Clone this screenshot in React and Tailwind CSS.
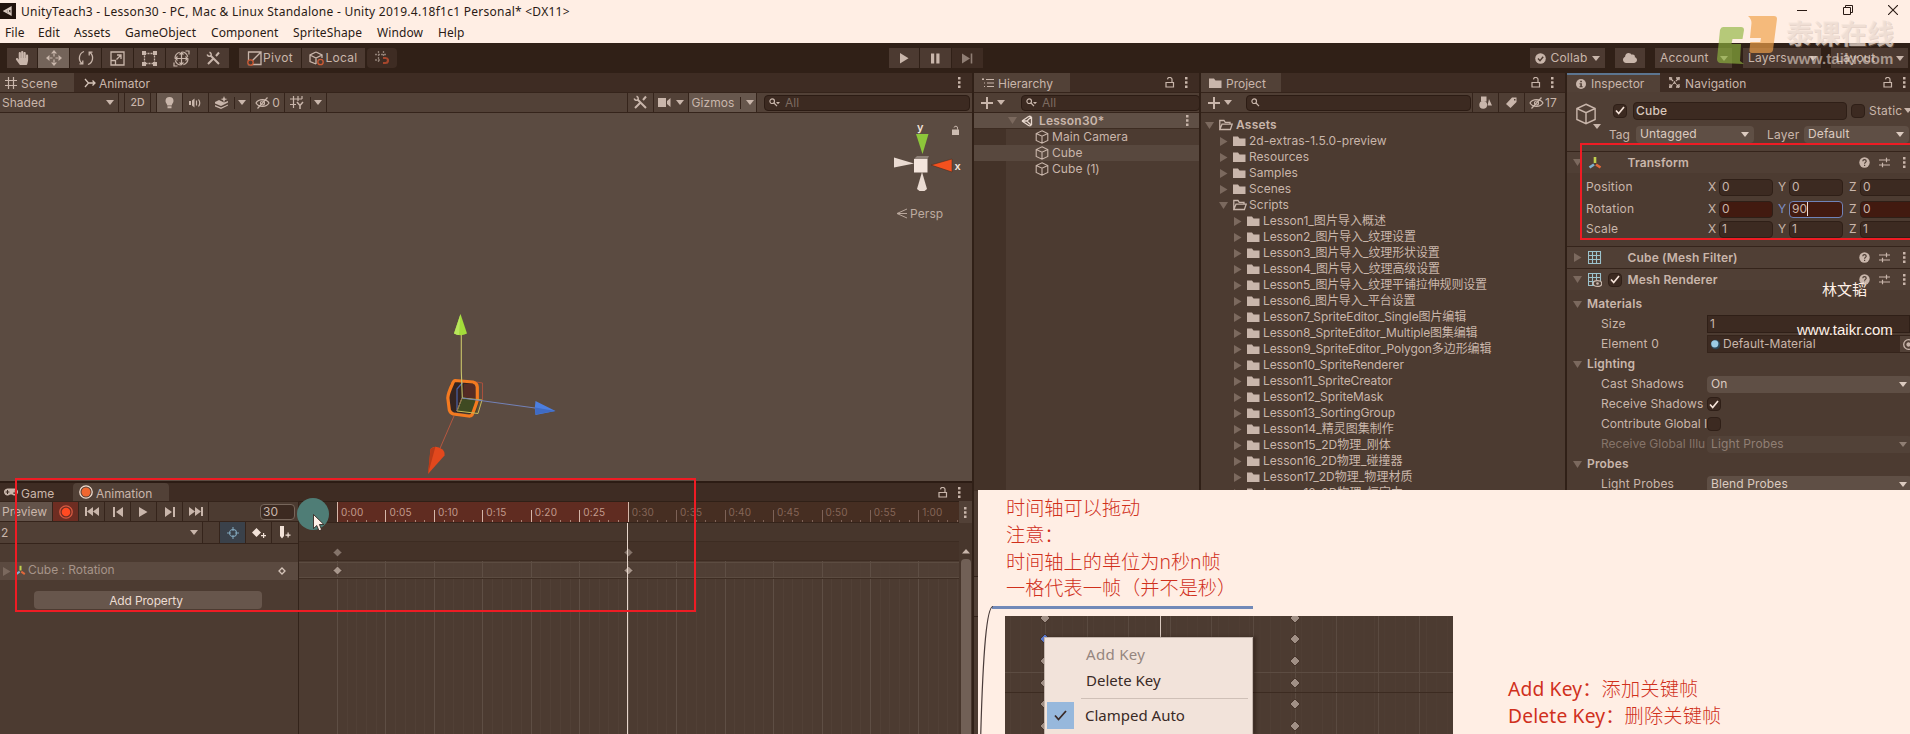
import React from "react";
import { FaHandPaper, FaCloud, FaGamepad } from "react-icons/fa";

const NOTE_FONT = "font-['Noto_Sans','Noto_Sans_CJK_SC',sans-serif]";

/* ---------- small icons ---------- */
const Svg = ({ w = 16, h = 16, vb, className = "", children, fill = "none", sw = 1.3 }) => (
  <svg width={w} height={h} viewBox={vb || `0 0 ${w} ${h}`} fill={fill} stroke={fill === "none" ? "currentColor" : "none"} strokeWidth={sw} className={"shrink-0 " + className}>
    {children}
  </svg>
);
const Caret = ({ className = "" }) => (
  <Svg w={8} h={5} fill="currentColor" className={className}><path d="M0 0h8L4 5z" /></Svg>
);
const Fold = ({ open, className = "" }) => (
  <Svg w={9} h={9} fill="currentColor" className={"text-[#7b695e] " + className}>
    {open ? <path d="M0 1h9L4.500 8z" /> : <path d="M1 0v9l7.500-4.500z" />}
  </Svg>
);
const Kebab = ({ className = "" }) => (
  <Svg w={3} h={11} fill="currentColor" className={className}><path d="M0 0h2.500v2.500H0zM0 4.200h2.500v2.500H0zM0 8.400h2.500v2.500H0z" /></Svg>
);
const Lock = ({ className = "" }) => (
  <Svg w={10} h={11} sw={1.2} className={className}><path d="M1 5.500h7.500v4.500H1zM7 5.500V3a2 2 0 0 0-4.500-.6" /></Svg>
);
const Folder = () => (
  <Svg w={13} h={12} fill="currentColor"><path d="M0 1.500h5l1.500 2H12.500V11H0z" /></Svg>
);
const FolderOpen = () => (
  <Svg w={14} h={12} sw={1.300}><path d="M.8 10.500V1.500H5l1.200 1.800H11V5M.8 10.500 3 5.200h10.200l-1.800 5.300z" /></Svg>
);
const Cube = ({ s = 14, sw = 1.100 }) => (
  <Svg w={s} h={s} vb="0 0 14 14" sw={sw}><path d="M7 .8 12.800 3.500v7L7 13.200 1.200 10.500v-7zM1.200 3.500 7 6.200l5.800-2.700M7 6.200v7" /></Svg>
);
const Search = ({ caret }) => (
  <Svg w={11} h={9} sw={1.200}><circle cx="3.200" cy="3.200" r="2.300" /><path d="m5 5 3 3.200" />{caret && <path d="M7 4h4L9 6.200z" fill="currentColor" stroke="none" />}</Svg>
);
const Tools = () => (
  <Svg w={15} h={15} sw={2}><path d="M4.500 4.500 13 13M2 13 8 7M10 5l3-3.500" /><path d="M1.200 3.500c.6 2 2.600 2.300 3.600 1.200S5 1.800 3.500 1.200" strokeWidth={1.500} /></Svg>
);
const Check = () => (
  <Svg w={10} h={9} sw={1.700} className="text-[#f6e4da]"><path d="m1 4.500 2.700 3L9 1" /></Svg>
);
const Help = () => (
  <Svg w={11} h={11} fill="currentColor"><circle cx="5.500" cy="5.500" r="5.200" /><path d="M3.800 4.200c.1-2.200 3.400-2 3.400 0 0 1.200-1.600 1.200-1.600 2.500M5.600 7.700v1.200" stroke="#4e3e34" strokeWidth="1.200" fill="none" /></Svg>
);
const Preset = () => (
  <Svg w={11} h={11} sw={1.200}><path d="M0 3h11M0 8h11M7.500 .8v4.400M3.500 5.800v4.400" /></Svg>
);
const HiddenEye = ({ className = "" }) => (
  <Svg w={15} h={12} sw={1.200} className={className}><path d="M1 6c2.500-4.500 10.500-4.500 13 0-2.500 4.500-10.500 4.500-13 0zM2.500 11.500 12.500.5" /><circle cx="7.500" cy="6" r="2" /></Svg>
);
const Grid = () => (
  <Svg w={12} h={12} sw={1.200}><path d="M3.500 0v12M8.500 0v12M0 3.500h12M0 8.500h12" /></Svg>
);
const Axes = ({ s = 14 }) => (
  <Svg w={s} h={s} vb="0 0 14 14" sw={2.600}>
    <path d="M7 1v6" stroke="#c2d04e" /><path d="M6 8.500 1.500 11.500" stroke="#7fb0cc" /><path d="m8 8.500 4.500 3" stroke="#e2683a" />
  </Svg>
);
const MeshIcon = ({ eye }) => (
  <Svg w={14} h={14} sw={1.100} className="text-[#9cc2cc]">
    <path d="M.5.500h12v12H.5zM4.500.500v12M8.500.500v12M.5 4.500h12M.5 8.500h12" />
    {eye && <><ellipse cx="9.500" cy="10.500" rx="4.200" ry="2.900" fill="#4e3e34" stroke="#cbb9ae" /><circle cx="9.500" cy="10.500" r="1.300" fill="#cbb9ae" stroke="none" /></>}
  </Svg>
);

/* ---------- shared pieces ---------- */
const TBtn = ({ w, active, children }) => (
  <div className={`flex h-5 items-center justify-center ${w} ${active ? "bg-[#74645a]" : "bg-[#4c3a31]"}`}>{children}</div>
);
const SearchBox = ({ w, caret, text }) => (
  <div className={`flex h-4 items-center gap-[5px] rounded border border-[#2c1c14] bg-[#3c2a21] pl-1 ${w}`}>
    <Search caret={caret} /><span className="text-[12px] leading-4 text-[#7d6b60]">{text}</span>
  </div>
);

const MENU = [["File", "w-[33px]"], ["Edit", "w-9"], ["Assets", "w-[51px]"], ["GameObject", "w-[86px]"], ["Component", "w-[82px]"], ["SpriteShape", "w-[84px]"], ["Window", "w-[61px]"], ["Help", "w-10"]];

function TitleArea() {
  return (
    <div className={`h-[43px] shrink-0 bg-[#ffeee4] text-[#2a1a14] ${NOTE_FONT}`}>
      <div className="flex h-[22px] items-center">
        <div className="flex h-4 w-4 items-center justify-center bg-[#21130d] text-[#d8c8be]">
          <Svg w={10} h={10} sw={1.300}><path d="M1 5 8 1.200v7.600zM1 5h4l3-3.800M5 5l3 3.800" /></Svg>
        </div>
        <span className="ml-[5px] mt-[2px] w-[560px] whitespace-nowrap text-[12px] tracking-[0.260px]">UnityTeach3 - Lesson30 - PC, Mac &amp; Linux Standalone - Unity 2019.4.18f1c1 Personal* &lt;DX11&gt;</span>
        <div className="ml-auto mr-[12px] flex items-center gap-[35.500px] pb-[2px]">
          <Svg w={10} h={10} sw={1}><path d="M0 5.500h10" /></Svg>
          <Svg w={10} h={10} sw={1}><path d="M.5 2.500h7v7h-7zM2.500 2.500v-2h7v7h-2" /></Svg>
          <Svg w={10} h={10} sw={1.100}><path d="m0 0 10 10M10 0 0 10" /></Svg>
        </div>
      </div>
      <div className="flex h-[21px] items-center pl-[5px] text-[12px] tracking-[0.100px]">
        {MENU.map(([m, w]) => <span key={m} className={`whitespace-nowrap ${w}`}>{m}</span>)}
      </div>
    </div>
  );
}

function MainToolbar() {
  return (
    <div className="flex h-[30px] shrink-0 items-center bg-[#302017] text-[12px] text-[#c9b6ab]">
      <div className="flex w-[232px] gap-px pl-[7px]">
        <TBtn w="w-[30px]"><FaHandPaper size={14} /></TBtn>
        <TBtn w="w-[31px]" active>
          <Svg w={16} h={16} fill="currentColor"><path d="M8 0l3 3.500H5zM8 16l3-3.500H5zM0 8l3.500-3v6zM16 8l-3.500-3v6zM7.400 4h1.200v2.500H7.400zM7.400 9.500h1.200V12H7.400zM4 7.400h2.500v1.200H4zM9.500 7.400H12v1.200H9.500z" /></Svg>
        </TBtn>
        <TBtn w="w-[31px]"><Svg w={16} h={16}><path d="M6 1.500A7 7 0 0 0 4 13.500M10 14.500A7 7 0 0 0 12 2.500M1.500 13.800h3.300v-3.300M14.500 2.200h-3.300v3.300" /></Svg></TBtn>
        <TBtn w="w-[31px]"><Svg w={15} h={15}><path d="M1 1h13v13H1zM1 9.500h4.500V14M6.500 8.500l4-4M7 4h4v4" /></Svg></TBtn>
        <TBtn w="w-[31px]"><Svg w={15} h={15}><path d="M2.500 2.500h10v10h-10z" strokeDasharray="2 1" /><path d="M0 0h4v4H0zM11 0h4v4h-4zM0 11h4v4H0zM11 11h4v4h-4z" fill="currentColor" stroke="none" /></Svg></TBtn>
        <TBtn w="w-[31px]"><Svg w={17} h={17} sw={1.200}><circle cx="8.500" cy="8.500" r="6.500" strokeDasharray="8 2" /><path d="M8.500 3v11M3 8.500h11M6.500 4.500l2-2 2 2M6.500 12.500l2 2 2-2M4.500 6.500l-2 2 2 2M12.500 6.500l2 2-2 2M12.500 1h3.500v3.500M1 12.500V16h3.500" /></Svg></TBtn>
        <TBtn w="w-[31px]"><Tools /></TBtn>
      </div>
      <div className="ml-[7px] flex gap-px">
        <TBtn w="w-[62px]">
          <Svg w={15} h={15} className="mr-px"><path d="M1.500 1h12.500v12.500H1.500zM4 11 14 1" /><circle cx="3.500" cy="11.500" r="2.700" stroke="#cf5b35" fill="#4c3a31" /></Svg>
          <span className="tracking-[0.400px]">Pivot</span>
        </TBtn>
        <TBtn w="w-[63px]">
          <Svg w={16} h={15}><path d="M7 1 13 4v3M7 13 1 10.500V4l6-3M1 4l6 3 6-3M7 7v6" /><circle cx="11.500" cy="11" r="2.700" stroke="#cf5b35" fill="#4c3a31" /></Svg>
          <span className="tracking-[0.300px]">Local</span>
        </TBtn>
      </div>
      <div className="ml-[2px] flex h-5 w-[30px] items-center justify-center rounded-sm bg-[#3e2c23] text-[#8f7e74]">
        <Svg w={14} h={14}><path d="M3.500 0v12M8.500 0v6M0 3.500h11M0 9h6" strokeDasharray="2 1" /><path d="M8 7h2.500a2.400 2.400 0 0 1 0 5H8" stroke="#a5462c" strokeWidth="2.200" /></Svg>
      </div>
      <div className="ml-[492px] flex gap-px">
        <TBtn w="w-[30px]"><Svg w={9} h={11} fill="currentColor"><path d="M0 0v10.500l8.500-5.200z" /></Svg></TBtn>
        <TBtn w="w-[31px]"><Svg w={9} h={11} fill="currentColor"><path d="M0 .5h3.200v10H0zM5.300.5h3.200v10H5.300z" /></Svg></TBtn>
        <div className="flex h-5 w-[31px] items-center justify-center bg-[#3e2c23] text-[#8f7e74]"><Svg w={11} h={11} fill="currentColor"><path d="M0 .5v10l8-5zM8.700.5h1.600v10H8.700z" /></Svg></div>
      </div>
      <div className="ml-auto flex pr-[2px] tracking-[0.200px]">
        <TBtn w="w-[75px]"><Svg w={11} h={11} fill="currentColor" className="mr-[4px]"><circle cx="5.500" cy="5.500" r="5.300" /><path d="m3 5.500 2 2.200 3.200-4" stroke="#4c3a31" strokeWidth="1.400" fill="none" /></Svg>Collab<Caret className="ml-1" /></TBtn>
        <div className="ml-[10px]"><TBtn w="w-[30px]"><FaCloud size={14} /></TBtn></div>
        <div className="ml-[10px] flex h-5 w-[77px] items-center justify-between bg-[#4c3a31] pl-[5px] pr-1">Account<Caret /></div>
        <div className="ml-[11px] flex h-5 w-[78px] items-center justify-between bg-[#4c3a31] pl-[5px] pr-1">Layers<Caret /></div>
        <div className="ml-[10px] flex h-5 w-[77px] items-center justify-between bg-[#4c3a31] pl-[5px] pr-1">Layout<Caret /></div>
      </div>
    </div>
  );
}

const Cell = ({ w, className = "", children }) => (
  <div className={`flex h-full items-center justify-center border-r border-[#35241b] ${w} ${className}`}>{children}</div>
);

function SceneGizmos() {
  return (
    <svg width="972" height="368" viewBox="0 113 972 368" className="block">
      {/* orientation gizmo */}
      <path d="M916 134h12.500l-6 20z" fill="#8dc63a" />
      <path d="M894 157.500v10l20-4z" fill="#eadbd2" />
      <path d="M952 159v13l-21-7z" fill="#f4511e" stroke="#3d2a20" strokeWidth=".5" />
      <path d="M922 172l5 17-2.500 2h-5l-2.500-2z" fill="#eadbd2" />
      <path d="M914 159l3-3h12l-1.500 3z" fill="#8f8178" /><path d="M914 159h13.500v13.500H914z" fill="#f4e5dc" />
      <g fill="#cdbcb1"><path d="M952 129.500h7v5.500h-7z" /><path d="M957.500 129.500v-1.300a1.700 1.700 0 0 0-3.400-.6" fill="none" stroke="#cdbcb1" strokeWidth="1" /></g>
      <path d="M907 209l-10 4.500 10 4.500M897 213.500h10" fill="none" stroke="#b9a79c" strokeWidth="1" />
      <g className="font-['Inter',sans-serif]">
        <text x="917" y="131" fontSize="11" fontWeight="600" fill="#f0e2d9">y</text>
        <text x="954.500" y="170" fontSize="11" fontWeight="600" fill="#f0e2d9">x</text>
        <text x="910" y="218" fontSize="12" fill="#bdaba0" letterSpacing=".1">Persp</text>
      </g>
      {/* move handles and the selected cube */}
      <path d="M450 384l5-3 20 2 1 16-5 15-20-2-2-5z" fill="#352420" />
      <path d="M464 384h11l1 15-13-1z" fill="#552b24" />
      <path d="M462 397l14 2 3 3-3 11-19-2z" fill="#3f4a22" />
      <path d="M473 381.500l9.500 1.500v17" fill="none" stroke="#a9503c" strokeWidth="1" />
      <path d="M457 411v-22l6-7" fill="none" stroke="#4a62a8" strokeWidth="1.200" />
      <path d="M455 380.500l18 1.500q4 1 4.300 5v13q-1 4-5 14.500-1 2-4 1.500l-15-2q-3-1-4-4l-1.500-12q0-4 5-15 1-2.500 2.200-2.500z" fill="none" stroke="#f47a20" strokeWidth="3.200" />
      <path d="M457 411l21 2.500 4-13.500-20-2z" fill="none" stroke="#c9bd5a" strokeWidth="1" />
      <path d="M461.300 335v36l1 27" fill="none" stroke="#c9c46a" strokeWidth="1.100" />
      <path d="M462 398l73 10" fill="none" stroke="#7382b8" strokeWidth="1" />
      <path d="M462 398l-5 13" fill="none" stroke="#8a6a50" strokeWidth="1" />
      <path d="M454 416l-16 37" fill="none" stroke="#b5573f" strokeWidth="1" />
      <path d="M460.500 314l6.500 19.500q-6.500 3.500-13 0z" fill="#a3dc3a" /><path d="M460.500 314l-6.500 19.500q3 1.500 5 1.500z" fill="#b9e65c" />
      <path d="M555.500 411l-20-10q-1.500 7 0 14z" fill="#4c7fe0" /><path d="M555.500 411l-20 3.500-.5-7z" fill="#3f6bc4" />
      <path d="M428 474l2.500-25q5-4.500 12 .5 2.500 2 2 6z" fill="#e2481d" /><path d="M428 474l2.500-25 5-2.500z" fill="#b93a18" />
    </svg>
  );
}

function ScenePanel() {
  return (
    <div className="flex h-[408px] shrink-0 flex-col text-[12px] text-[#c9b6ab]">
      <div className="flex h-[19px] items-center bg-[#3e2c23]">
        <div className="flex h-full w-[74px] items-center bg-[#524137] pl-[5px]"><Grid /><span className="ml-1 mt-[2px] tracking-[0.200px]">Scene</span></div>
        <Svg w={12} h={10} className="ml-[10px] text-[#d5c4b9]"><path d="M1 1l3.500 4L1 9M4.500 5H11M8.500 2.500 11 5 8.500 7.500" /></Svg>
        <span className="ml-[3px] mt-[2px]">Animator</span>
        <Kebab className="ml-auto mr-[11px]" />
      </div>
      <div className="flex h-[21px] items-center border-y border-[#35241b] bg-[#524137]">
        <Cell w="w-[119px]" className="!justify-start"><span className="w-[106px] pl-[2px]">Shaded</span><Caret /></Cell>
        <Cell w="w-[6px]" /><Cell w="w-[26px]"><span className="text-[10.500px] font-medium">2D</span></Cell><Cell w="w-[6px]" />
        <Cell w="w-[26px]" className="bg-[#67574d]"><Svg w={9} h={12} fill="currentColor"><path d="M4.500 0a4 4 0 0 1 4 4c0 2-1.500 2.500-1.800 4.500H2.300C2 6.500.5 6 .5 4a4 4 0 0 1 4-4zM2.500 9.300h4v2h-4z" /></Svg></Cell>
        <Cell w="w-[26px]"><Svg w={13} h={10} sw={1.200}><path d="M0 3h2v4H0zM3 2.500 5.500.5v9L3 7.500z" fill="currentColor" stroke="none" /><path d="M7.500 2.500v5M9.500 1.500q2.500 3.500 0 7" /></Svg></Cell>
        <Cell w="w-[25px]" className="!border-r-0"><Svg w={13} h={13} fill="currentColor"><path d="M0 6l4-2 5 2.500L13 5v1.500L6 10 0 7.500zM0 9l6 2.500L13 8.500v1L6 13 0 10.500zM9 0l1 2.500L12.500 3 10 4 9 6.500 8 4 5.500 3 8 2.500z" /></Svg></Cell>
        <Cell w="w-[17px]"><div className="mr-auto h-3 w-px bg-[#35241b]" /><Caret className="mr-1" /></Cell>
        <Cell w="w-[34px]"><HiddenEye /><span className="ml-[2px]">0</span></Cell>
        <Cell w="w-[25px]" className="!border-r-0 pr-[2px]"><Svg w={14} h={13} sw={1.200}><path d="M3.500 0v12M8 0v5M0 3h12M0 8.500h6M12 0v3" /><path d="M7 6l3 3.500V13M13 6l-3 3.500" strokeWidth="1.500" /></Svg></Cell>
        <Cell w="w-[17px]"><div className="mr-auto h-3 w-px bg-[#35241b]" /><Caret className="mr-1" /></Cell>
        <Cell w="w-[301px]" />
        <Cell w="w-[26px]"><Tools /></Cell>
        <Cell w="w-[35px]"><Svg w={13} h={9} fill="currentColor"><path d="M0 0h8v9H0zM9 3l3.500-3v9L9 6z" /></Svg><Caret className="ml-[5px]" /></Cell>
        <Cell w="w-[68px]" className="bg-[#67574d]"><span className="tracking-[0.100px]">Gizmos</span><div className="mx-[5px] h-3 w-px bg-[#35241b]" /><Caret /></Cell>
        <div className="ml-[7px]"><SearchBox w="w-[206px]" caret text="All" /></div>
      </div>
      <div className="h-[368px] bg-[#5b4b41]"><SceneGizmos /></div>
    </div>
  );
}

const FRAME = 48.45;
const LABELS = ["0:00", "0:05", "0:10", "0:15", "0:20", "0:25", "0:30", "0:35", "0:40", "0:45", "0:50", "0:55", "1:00"];
const range = (n) => Array.from({ length: n }, (_, i) => i);
const Diamond = ({ x, y, c, r = 4.500 }) => <path d={`M${x} ${y - r}l${r} ${r}-${r} ${r}-${r}-${r}z`} fill={c} stroke="#3a281f" strokeWidth=".8" />;

function Timeline() {
  return (
    <div className="w-[660px] bg-[#4c3b31]">
      <div className="relative flex h-[21px] border-b border-[#35241b] bg-[#462e22]">
        <div className="h-full w-[38px] bg-[#3e2c23]" />
        <div className="h-full w-[291px] bg-[#602c21]" />
        <div className="absolute bottom-0 left-[38px] flex h-full w-[621px] items-center text-[10px] tracking-[0.200px] text-[#c29a8c]">
          {LABELS.map((l, i) => <span key={l} className={`w-[48.450px] shrink-0 pl-[4px] pt-px ${i > 5 ? "text-[#856557]" : ""}`}>{l}</span>)}
        </div>
        <svg width="660" height="20" className="absolute left-0 top-0">
          {range(65).map((i) => {
            const x = Math.round(38 + (i * FRAME) / 5) + 0.5;
            const h = i === 0 ? 20 : i % 5 ? 2 : i === 30 ? 20 : 12;
            return <path key={i} d={`M${x} 20v-${h}`} stroke={i % 5 === 0 && i < 31 ? "#d6b7aa" : i < 31 ? "#a98577" : "#7d6257"} />;
          })}
        </svg>
      </div>
      <svg width="660" height="211" viewBox="299 523 660 211" className="block">
        <path d="M299 523h660v18H299z" fill="#47362c" /><path d="M299 542h660v18H299z" fill="#443228" />
        <path d="M299 541.500h660M299 560.500h660" stroke="#3d2c22" />
        <path d="M299 562h660v15H299z" fill="#503f35" />
        {range(65).map((i) => {
          const x = Math.round(337 + (i * FRAME) / 5) + 0.5;
          return <path key={i} d={`M${x} ${i % 5 ? 562 : 561}V734`} stroke={i % 5 ? "#514036" : "#5e4e44"} />;
        })}
        <path d="M299 562.500h660M299 577.500h660" stroke="#5c4c41" /><path d="M299 578.500h660" stroke="#3e2d23" />
        <Diamond x={337.500} y={552.500} c="#85746a" /><Diamond x={628.500} y={552.500} c="#85746a" />
        <Diamond x={337.500} y={570.500} c="#a8978c" /><Diamond x={628.500} y={570.500} c="#a8978c" />
        <path d="M627.500 523v211" stroke="#e6d5cb" />
      </svg>
    </div>
  );
}

function AnimationPanel() {
  const btn = "w-[26px]";
  return (
    <div className="flex h-[253px] shrink-0 flex-col border-t-2 border-[#2c1c14] text-[12px] text-[#c9b6ab]">
      <div className="flex h-[18px] items-center bg-[#3e2c23]">
        <div className="flex w-[73px] items-center pl-1"><FaGamepad size={14} /><span className="ml-[3px] mt-[3px]">Game</span></div>
        <div className="flex h-full w-24 items-center rounded-t-sm bg-[#524137] pl-[6px]">
          <Svg w={14} h={14}><circle cx="7" cy="7" r="6.200" stroke="#f3ddcf" /><circle cx="7" cy="7" r="4.500" fill="#f0662f" stroke="none" /></Svg>
          <span className="ml-[3px] mt-[3px] tracking-[-0.050px]">Animation</span>
        </div>
        <Lock className="ml-auto" /><Kebab className="ml-[10px] mr-[11px]" />
      </div>
      <div className="flex h-[233px]">
        <div className="w-[299px] border-r border-[#33231a] bg-[#4c3b31]">
          <div className="flex h-[21px] items-center border-y border-[#35241b]">
            <Cell w="w-[53px]" className="bg-[#63534a] !justify-start pl-[2px] pt-px">Preview</Cell>
            <Cell w={btn} className="bg-[#6e2d22]"><Svg w={14} h={14}><circle cx="7" cy="7" r="6.200" stroke="#d65a42" /><circle cx="7" cy="7" r="4.300" fill="#ff4a22" stroke="none" /></Svg></Cell>
            <Cell w={btn}><Svg w={14} h={9} fill="currentColor"><path d="M0 0h2v9H0zM8 0v9L2 4.500zM14 0v9L8 4.500z" /></Svg></Cell>
            <Cell w={btn}><Svg w={10} h={10} fill="currentColor"><path d="M0 0h2v10H0zM10 0v10L3 5z" /></Svg></Cell>
            <Cell w={btn}><Svg w={9} h={10} fill="currentColor"><path d="M0 0v10l8.500-5z" /></Svg></Cell>
            <Cell w={btn}><Svg w={10} h={10} fill="currentColor"><path d="M8 0h2v10H8zM0 0v10l7-5z" /></Svg></Cell>
            <Cell w={btn}><Svg w={14} h={9} fill="currentColor"><path d="M12 0h2v9h-2zM0 0v9l6-4.500zM6 0v9l6-4.500z" /></Svg></Cell>
            <div className="ml-auto mr-[3px] h-4 w-[35px] rounded-sm border border-[#77665b] bg-[#3c2a21] pl-[2px] leading-[14px] tracking-[0.200px]">30</div>
          </div>
          <div className="flex h-[22px] items-center border-b border-[#35241b]">
            <Cell w="w-[203px]" className="bg-[#503f35] !justify-start"><span className="w-[190px] pl-px pt-px">2</span><Caret /></Cell>
            <Cell w="w-[17px]" />
            <Cell w={btn} className="bg-[#3a414a] text-[#7fa3b8]"><Svg w={12} h={12} sw={1.100}><circle cx="6" cy="6" r="3.500" /><path d="M6 0v4M6 8v4M0 6h4M8 6h4" /></Svg></Cell>
            <Cell w={btn} className="text-[#f2e2d8]"><Svg w={14} h={12} fill="currentColor"><path d="M4.500 1 9 5.500 4.500 10 0 5.500zM9 8h5v1.200H9zM11 6h1.200v5H11z" /></Svg></Cell>
            <Cell w={btn} className="!border-r-0 text-[#f2e2d8]"><Svg w={12} h={13} fill="currentColor"><path d="M1 0h4v10l-2 2.500L1 10zM6.500 8.500h5v1.200h-5zM8.500 6.500h1.200v5H8.500z" /></Svg></Cell>
          </div>
          <div className="mt-[18px] flex h-[18px] items-center bg-[#5b4a40] pb-[2px] text-[#a69489]">
            <Fold className="ml-[2px] mt-[3px]" /><div className="ml-[4px]"><Axes s={11} /></div>
            <span className="ml-[2px] tracking-[-0.020px]">Cube : Rotation</span>
            <Svg w={8} h={8} className="ml-auto mr-3 mt-[2px] text-[#d5c4b9]"><path d="M4 1l3 3-3 3-3-3z" /></Svg>
          </div>
          <div className="ml-[34px] mt-[11px] h-[18px] w-[228px] rounded-sm bg-[#67564c] pr-1 text-center leading-[19px] tracking-[-0.150px] text-[#ecdcd2]">Add Property</div>
        </div>
        <div className="mt-px"><Timeline /></div>
        <div className="flex flex-1 flex-col items-center bg-[#47362c]">
          <div className="flex h-[22px] w-full items-center justify-center bg-[#524137]"><Kebab /></div>
          <Svg w={8} h={5} fill="currentColor" className="mt-[26px]"><path d="M0 4.500h8L4 0z" /></Svg>
          <div className="mt-[5px] w-[10px] flex-1 rounded-t bg-[#716056]" />
        </div>
      </div>
    </div>
  );
}

const PanelTabs = ({ w, icon, title }) => (
  <div className="flex h-[19px] items-center bg-[#3e2c23]">
    <div className={`flex h-full items-center bg-[#524137] pl-2 ${w}`}>{icon}<span className="ml-1 mt-[3px]">{title}</span></div>
    <Lock className="ml-auto" /><Kebab className="ml-[10px] mr-[11px]" />
  </div>
);
const Plus = () => <><Svg w={12} h={12} sw={2}><path d="M6 0v12M0 6h12" /></Svg><Caret className="ml-1" /></>;

function Hierarchy() {
  return (
    <div className="w-[225px] bg-[#4c3b31] text-[12px] text-[#c9b6ab]">
      <PanelTabs w="w-[96px]" title="Hierarchy" icon={<Svg w={12} h={10} sw={1.200}><path d="M4 1.500h8M5 5h7M5 8.500h7M1 0v1.500M2 5h1M2 8.500h1M0 1.500h2" /></Svg>} />
      <div className="flex h-[21px] items-center border-y border-[#35241b] bg-[#4f3e34] pl-[7px]"><Plus /><div className="ml-4"><SearchBox w="w-[179px]" caret text="All" /></div></div>
      <div className="flex h-[378px] flex-col bg-[linear-gradient(to_right,#433228_32px,#4c3b31_32px)]">
        <div className="flex h-4 items-center border-b border-[#3d2c22] bg-[#5f4f45] pl-[34px] pr-[10px]">
          <Fold open /><Svg w={12} h={12} sw={1.300} className="ml-1 text-[#e8d8ce]"><path d="M1 6 8 1.200M1 6l7 4.800M10.500 2v8M1.500 6H6l4.200-4.300M6 6l4.200 4.300M8 1.200l2.500.5M8 10.800l2.500-.5" /></Svg>
          <span className="ml-[6px] font-semibold tracking-[0.200px]">Lesson30*</span><Kebab className="ml-auto" />
        </div>
        {["Main Camera", "Cube", "Cube (1)"].map((t) => (
          <div key={t} className={`flex h-4 items-center pl-[61px] ${t === "Cube" ? "bg-[#58483e]" : ""}`}><Cube /><span className="ml-[3px] tracking-[0.070px]">{t}</span></div>
        ))}
      </div>
      <div className="mt-[85px] h-[41px] border-y border-[#33231a] bg-[#524137]" />
    </div>
  );
}

const TIGHT = "tracking-[-0.090px]";
const WIDE_CJK = "tracking-[-0.130px]";
const LOOSE = "tracking-[0.030px]";
const TREE = [
  [0, "Assets", "font-semibold tracking-[0.200px]", 1],
  [1, "2d-extras-1.5.0-preview", "tracking-[0.040px]"], [1, "Resources", "tracking-[0.040px]"], [1, "Samples", "tracking-[0.040px]"], [1, "Scenes", "tracking-[0.040px]"], [1, "Scripts", "tracking-[0.040px]", 1],
  [2, "Lesson1_图片导入概述", LOOSE], [2, "Lesson2_图片导入_纹理设置", WIDE_CJK], [2, "Lesson3_图片导入_纹理形状设置", WIDE_CJK], [2, "Lesson4_图片导入_纹理高级设置", WIDE_CJK],
  [2, "Lesson5_图片导入_纹理平铺拉伸规则设置", WIDE_CJK], [2, "Lesson6_图片导入_平台设置", WIDE_CJK], [2, "Lesson7_SpriteEditor_Single图片编辑", TIGHT],
  [2, "Lesson8_SpriteEditor_Multiple图集编辑", "tracking-[-0.140px]"], [2, "Lesson9_SpriteEditor_Polygon多边形编辑", TIGHT], [2, "Lesson10_SpriteRenderer", TIGHT],
  [2, "Lesson11_SpriteCreator", TIGHT], [2, "Lesson12_SpriteMask", TIGHT], [2, "Lesson13_SortingGroup", TIGHT], [2, "Lesson14_精灵图集制作", LOOSE],
  [2, "Lesson15_2D物理_刚体", LOOSE], [2, "Lesson16_2D物理_碰撞器", LOOSE], [2, "Lesson17_2D物理_物理材质", LOOSE], [2, "Lesson18_2D物理_恒定力", LOOSE],
];
const INDENT = ["pl-[4px]", "pl-[18px]", "pl-[32px]"];

function Project() {
  return (
    <div className="ml-[2px] w-[364px] bg-[#4c3b31] text-[12px] text-[#c9b6ab]">
      <PanelTabs w="w-[80px]" title="Project" icon={<Folder />} />
      <div className="flex h-[21px] items-center border-y border-[#35241b] bg-[#4f3e34] pl-[7px]">
        <Plus /><div className="ml-[14px]"><SearchBox w="w-[225px]" /></div>
        <div className="ml-[1px] flex h-full flex-1">
          <div className="flex w-[26px] items-center justify-center border-l border-[#35241b]"><Svg w={13} h={13} fill="currentColor"><path d="M2 .5h5.500v5H2zM10 3l3 6.500H8.500z" /><circle cx="4.200" cy="8.800" r="3.900" /></Svg></div>
          <div className="flex w-[26px] items-center justify-center border-l border-[#35241b]"><Svg w={11} h={11} fill="currentColor"><path d="M0 7 6 .5h4.500V5L4.500 11zM8 2v1.500h1.500V2z" fillRule="evenodd" /></Svg></div>
          <div className="flex flex-1 items-center border-l border-[#35241b] pl-[4px]"><HiddenEye /><span className="ml-px">17</span></div>
        </div>
      </div>
      <div className="flex h-[378px] flex-col overflow-hidden pt-1">
        {TREE.map(([d, t, track, open]) => (
          <div key={t} className={`flex h-4 shrink-0 items-center whitespace-nowrap ${INDENT[d]}`}>
            <Fold open={open} className="mt-px" /><div className={`ml-[5px] flex ${d ? "w-[16px]" : "w-[17px]"}`}>{open ? <FolderOpen /> : <Folder />}</div>
            <span className={track}>{t}</span>
          </div>
        ))}
      </div>
    </div>
  );
}

const Box = ({ on }) => <div className="flex h-[14px] w-[14px] shrink-0 items-center justify-center rounded-sm border border-[#2f1f17] bg-[#3c2a21]">{on && <Check />}</div>;
const Drop = ({ w, children, dim }) => (
  <div className={`flex h-[17px] shrink-0 items-center justify-between rounded-sm pl-1 pr-[5px] ${w} ${dim ? "bg-[#524238] text-[#907f74]" : "bg-[#5f4f45] text-[#dccbc0]"}`}><span className="tracking-[0.120px]">{children}</span><Caret /></div>
);
const CompHeader = ({ open, icon, title, check }) => (
  <div className="flex h-full items-center bg-[#503f35] pl-[6px]">
    <Fold open={open} /><div className="ml-[6px] flex w-[19.500px]">{icon}</div><div className="w-[20px]">{check && <Box on />}</div>
    <span className="font-semibold tracking-[0.150px]">{title}</span>
    <div className="ml-auto flex items-center pr-1"><Help /><div className="ml-[9px] mr-[13px]"><Preset /></div><Kebab /></div>
  </div>
);
const VecRow = ({ h, label, v, hot }) => {
  const field = `flex h-[17px] shrink-0 items-center rounded-sm border pl-[2px] ${hot ? "bg-[#421a10]" : "bg-[#3c2a21]"}`;
  return (
    <div className={`flex items-center pl-[19px] ${h}`}>
      <span className="w-[122px] shrink-0 tracking-[0.200px]">{label}</span>
      <span className="w-[11px] shrink-0">X</span><div className={`${field} w-[54px] border-[#2f1f17]`}>{v[0]}</div>
      <span className={`ml-[5px] w-[11px] shrink-0 ${hot ? "text-[#7f90c8]" : ""}`}>Y</span>
      <div className={`${field} w-[54px] ${hot ? "border-[#6f83b8]" : "border-[#2f1f17]"}`}>{v[1]}{hot && <i className="h-[14px] w-px bg-[#f0e0d6]" />}</div>
      <span className="ml-[6px] w-[11px] shrink-0">Z</span><div className={`${field} w-[60px] border-[#2f1f17]`}>{v[2]}</div>
    </div>
  );
};
const Prop = ({ label, dim, children }) => (
  <div className={`flex h-5 items-center pl-[34px] ${dim ? "text-[#857469]" : ""}`}>
    <span className={`w-[106px] shrink-0 whitespace-nowrap ${label.includes("Global") ? "tracking-[0.020px]" : "tracking-[0.150px]"}`}>{label}</span>{children}
  </div>
);
const Group = ({ children }) => (
  <div className="flex h-5 items-center pl-[6px]"><Fold open /><span className="ml-[5px] font-semibold tracking-[0.150px]">{children}</span></div>
);

function Inspector() {
  return (
    <div className="ml-[2px] flex-1 overflow-hidden bg-[#4c3b31] text-[12px] text-[#c9b6ab]">
      <div className="flex h-[19px] items-center bg-[#3e2c23]">
        <div className="flex h-full w-[93px] items-center border-t-2 border-[#5c7590] bg-[#524137] pl-[9px]">
          <Svg w={10} h={10} fill="currentColor"><circle cx="5" cy="5" r="5" /><path d="M4.200 1.800h1.700v1.500H4.200zM3.500 4.200h2.400v3h.8v1H3.500v-1h.8v-2h-.8z" fill="#524137" /></Svg>
          <span className="ml-[5px]">Inspector</span>
        </div>
        <Svg w={11} h={11} className="ml-[9px]"><path d="M0 1h4M1 0v4M7 1h4M10 0v4M0 10h4M1 7v4M7 10h4M10 7v4M2 2l7 7M9 2 2 9" strokeDasharray="3 .8" /></Svg>
        <span className="ml-[5px] mt-[2px] tracking-[0.100px]">Navigation</span>
        <Lock className="ml-auto" /><Kebab className="ml-[10px] mr-[4px]" />
      </div>
      <div className="flex h-[59px] bg-[#503f35] pl-2 pt-[9px]">
        <div className="w-[36px] shrink-0 pt-[2px]"><Cube s={22} sw={0.900} /><Caret className="-mt-px ml-[18px]" /></div>
        <div className="shrink-0">
          <div className="flex h-[19px] items-center">
            <div className="ml-[2px]"><Box on /></div>
            <div className="ml-[6px] flex h-[18px] w-[214px] shrink-0 items-center rounded-sm border border-[#2f1f17] bg-[#3c2a21] pl-[2px] font-medium tracking-[0.200px] text-[#d8c7bc]">Cube</div>
            <div className="ml-1"><Box /></div><span className="ml-[4px] w-[35px] tracking-[0.200px]">Static</span><Caret />
          </div>
          <div className="mt-[5px] flex h-[18px] items-center">
            <span className="-ml-[2px] w-[27px] pt-[2px]">Tag</span><Drop w="w-[118px]">Untagged</Drop>
            <span className="ml-[13px] w-[37px] pt-[2px] tracking-[0.200px]">Layer</span><Drop w="w-[105px]">Default</Drop>
          </div>
        </div>
      </div>
      <div className="h-[22px] border-t border-[#35241b]"><CompHeader open title="Transform" icon={<Axes />} /></div>
      <div className="h-[73px] pt-1">
        <VecRow h="h-[20px]" label="Position" v={["0", "0", "0"]} />
        <VecRow h="h-[24px]" label="Rotation" v={["0", "90", "0"]} hot />
        <VecRow h="h-[16px]" label="Scale" v={["1", "1", "1"]} />
      </div>
      <div className="h-[22px] border-t border-[#35241b]"><CompHeader title="Cube (Mesh Filter)" icon={<MeshIcon />} /></div>
      <div className="h-[22px] border-t border-[#35241b]"><CompHeader open check title="Mesh Renderer" icon={<MeshIcon eye />} /></div>
      <div className="pt-[4px]">
        <Group>Materials</Group>
        <Prop label="Size"><div className="h-[18px] w-[210px] border border-[#2f1f17] bg-[#3c2a21] pl-[2px] leading-4">1</div></Prop>
        <Prop label="Element 0">
          <div className="flex h-[18px] w-[210px] shrink-0 items-center border border-[#35241b] bg-[#3c2a21] pl-[2px]">
            <Svg w={11} h={11}><circle cx="5.500" cy="5.500" r="4.800" fill="#2c4656" stroke="none" /><circle cx="4.800" cy="4.800" r="3.600" fill="#9bcbe4" stroke="none" /></Svg>
            <span className="ml-[2px] w-[177px] tracking-[0.060px]">Default-Material</span>
            <div className="flex h-full flex-1 items-center bg-[#524137] pl-[3px]"><Svg w={11} h={11}><circle cx="5.500" cy="5.500" r="4.800" /><circle cx="5.500" cy="5.500" r="1.500" fill="currentColor" /></Svg></div>
          </div>
        </Prop>
        <Group>Lighting</Group>
        <Prop label="Cast Shadows"><Drop w="w-[205px]">On</Drop></Prop>
        <Prop label="Receive Shadows"><Box on /></Prop>
        <Prop label="Contribute Global I"><Box /></Prop>
        <Prop label="Receive Global Illu" dim><Drop w="w-[205px]" dim>Light Probes</Drop></Prop>
        <Group>Probes</Group>
        <Prop label="Light Probes"><Drop w="w-[205px]">Blend Probes</Drop></Prop>
      </div>
    </div>
  );
}

/* ---------- mind-map notes window lying over the editor ---------- */
function Notes() {
  return (
    <div className={`absolute left-[978px] top-[490px] flex h-[244px] w-[932px] overflow-hidden bg-[#ffeee4] text-[19.200px] text-[#d0301c] ${NOTE_FONT}`}>
      <svg width="16" height="140" viewBox="978 604 16 140" className="absolute left-0 top-[114px]"><path d="M993 606.500c-6 0-10 40-12.500 137" fill="none" stroke="#4a3c3a" strokeWidth="1.200" /></svg>
      <div className="w-[475px]">
        <div className="ml-[14px] h-[119px] w-[261px] border-b-[3px] border-[#7189b8] pl-[14px] pt-[5px] font-light leading-[26.800px]">
          {["时间轴可以拖动", "注意：", "时间轴上的单位为n秒n帧", "一格代表一帧（并不是秒）"].map((t) => <p key={t} className="whitespace-nowrap">{t}</p>)}
        </div>
        <div className="relative ml-[27px] mt-[7px] h-[118px] w-[448px] bg-[#4c3b31]">
          <svg width="448" height="118" viewBox="1005 616 448 118" className="block">
            {range(43).map((i) => <path key={i} d={`M${1010.500 + i * 10.400} 616v118`} stroke="#503f35" />)}
            {range(10).map((i) => <path key={i} d={`M${Math.round(1045 + i * 41.600) + 0.500} 616v118`} stroke="#5a4a40" />)}
            <path d="M1005 672.500h448" stroke="#5c4c42" /><path d="M1005 692.500h448" stroke="#3c2b21" />
            <path d="M1160.500 616v24" stroke="#d8c8be" />
            {[618, 639, 661, 683, 704, 726].map((y, i) => (
              <g key={y}><Diamond x={1045} y={y} r={5} c={i === 1 ? "#5b78c8" : "#a08f85"} /><Diamond x={1295} y={y} r={5} c="#a08f85" /></g>
            ))}
          </svg>
          <div className="absolute left-[39px] top-[21px] h-[97px] w-[209px] border border-b-0 border-[#c5b6ad] bg-[#f2e3da] text-[15px] text-[#3a2a26] shadow-[3px_0_3px_rgba(30,15,10,0.400)]">
            <p className="mt-[3px] pl-[41px] leading-[26px] tracking-[0.300px] text-[#95867f]">Add Key</p>
            <p className="pl-[41px] leading-[26px]">Delete Key</p>
            <div className="ml-9 mr-1 mt-[5px] h-px bg-[#cfc0b7]" />
            <div className="mt-[3px] flex items-center pl-[2px]">
              <div className="flex h-[27px] w-[27px] items-center justify-center bg-[#97b8dc]"><Svg w={13} h={11} sw={1.800}><path d="m1 5.500 3.500 4L12 1" /></Svg></div>
              <span className="ml-[11px]">Clamped Auto</span>
            </div>
          </div>
        </div>
      </div>
      <div className="ml-[55px] whitespace-nowrap pt-[185px] leading-[27px] tracking-[0.180px]">
        <p>Add Key：<span className="font-light">添加关键帧</span></p>
        <p>Delete Key：<span className="font-light">删除关键帧</span></p>
        <p className="mt-px">Clamped Auto：<span className="font-light">切线模式，自动设置切线</span></p>
      </div>
    </div>
  );
}

function Overlays() {
  return (
    <>
      <div className="absolute left-[15px] top-[478px] h-[134px] w-[681px] border-2 border-[#ee1c24]" />
      <div className="absolute left-[1580px] top-[143px] h-[97px] w-[340px] border-2 border-[#ee1c24]" />
      <div className="absolute left-[297px] top-[498px] h-8 w-8 rounded-full bg-[#4f7d76]" />
      <svg width="12" height="18" viewBox="0 0 12 18" className="absolute left-[313px] top-[514px]"><path d="M.5.500v14l3.300-3 2.200 5.300 2.600-1.100-2.200-5.200h4.400z" fill="#fff1e8" stroke="#2a1a14" strokeWidth=".8" /></svg>
      <svg width="64" height="50" viewBox="1715 15 64 50" className="absolute left-[1715px] top-[15px]">
        <path d="M1723 27h18q3 0 3 3l-1.500 9-10 0-1 5 9.500 0L1740 61l4 3-24-1q-3-1-3-4l3-29q1-3 3-3z" fill="#8fb53f" opacity=".65" />
        <path d="M1748 16h26q3 0 3 3l-4 31q-.5 3-4 3h-17q-3 0-2.500-3l.8-8h10l.7-4h-11l1.500-15q0-4-3.500-7z" fill="#f0a04a" opacity=".68" />
      </svg>
      <div className="absolute left-[1786px] top-[16px] whitespace-nowrap text-[27px] font-bold leading-[34px] text-[#f3e3d9]/70 [text-shadow:1px_1px_0_rgba(170,150,140,0.300)] font-['Noto_Sans_CJK_SC',sans-serif]">泰课在线</div>
      <div className="absolute left-[1787px] top-[50px] whitespace-nowrap text-[15px] font-bold leading-[18px] tracking-[0.150px] text-[#e6d7ce]/60 font-['Liberation_Sans',sans-serif]">www.taikr.com</div>
      <div className="absolute left-[1822px] top-[279px] whitespace-nowrap text-[15px] leading-5 text-[#fff1e8] font-['Noto_Sans_CJK_SC',sans-serif]">林文韬</div>
      <div className="absolute left-[1797px] top-[320px] whitespace-nowrap text-[15px] leading-5 text-[#fff1e8] font-['Liberation_Sans',sans-serif]">www.taikr.com</div>
    </>
  );
}

export default function App() {
  return (
    <div className="relative flex h-[734px] w-[1910px] flex-col overflow-hidden bg-[#302017] font-['Inter','Noto_Sans_CJK_SC',sans-serif]">
      <TitleArea />
      <MainToolbar />
      <div className="flex h-[661px]">
        <div className="mr-[2px] flex w-[972px] flex-col">
          <ScenePanel />
          <AnimationPanel />
        </div>
        <Hierarchy />
        <Project />
        <Inspector />
      </div>
      <Notes />
      <Overlays />
    </div>
  );
}
